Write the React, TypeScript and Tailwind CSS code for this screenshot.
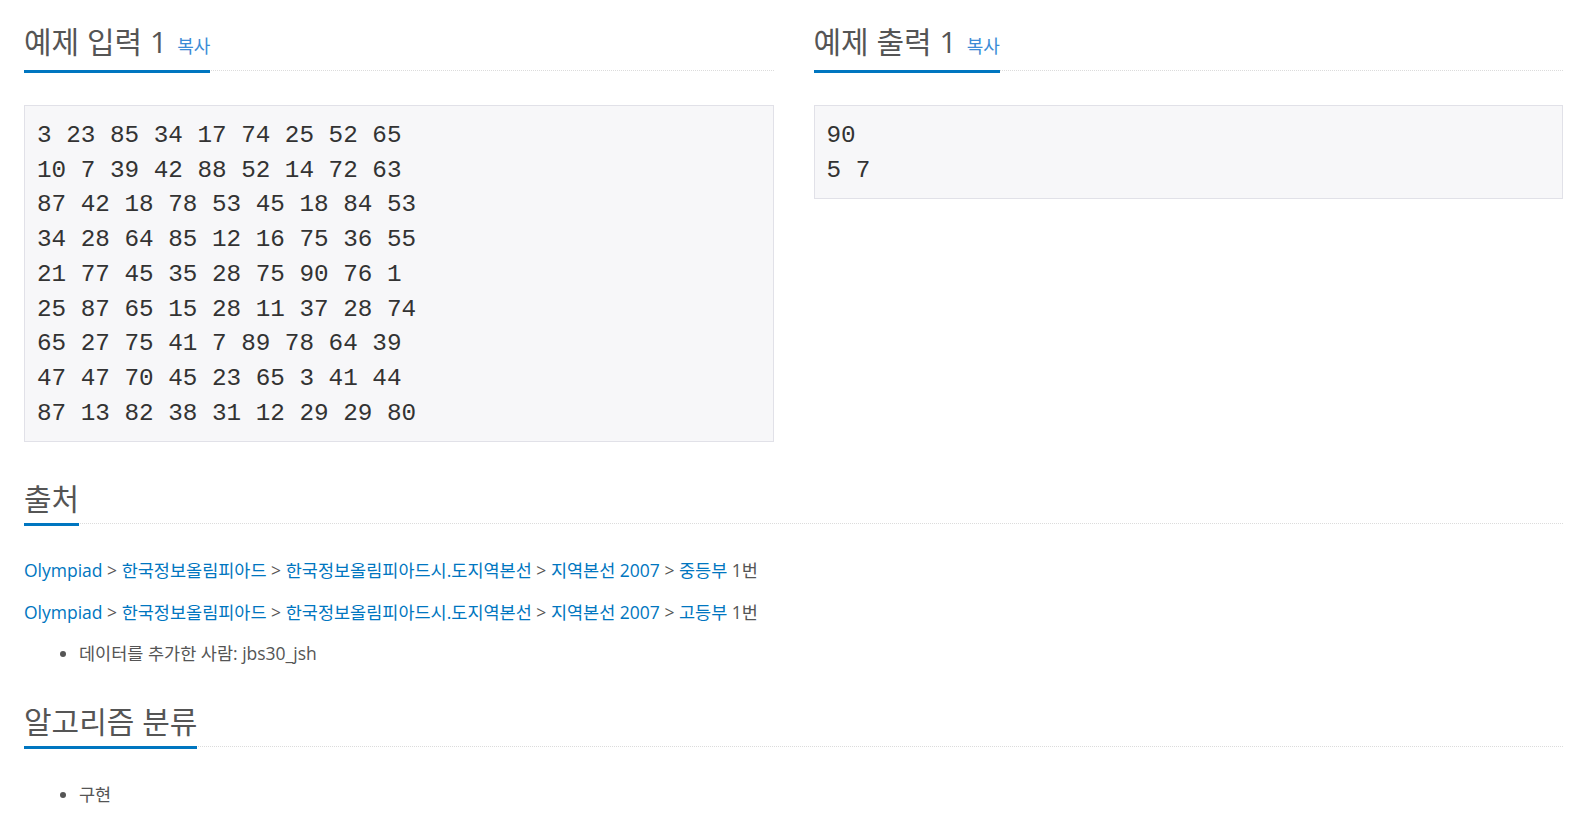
const sans = "font-['Open_Sans','Noto_Sans_CJK_KR',sans-serif]";

function Headline({ title, copy }: { title: string; copy?: boolean }) {
  return (
    <div className="border-b border-dotted border-[#dcdcdc]">
      <h2
        className={`inline-block mb-[-3px] pb-[6px] border-b-[3px] border-[#0076c0] text-[30px] leading-[36px] font-normal text-[#555] ${sans}`}
      >
        {title}
        {copy && (
          <span className="ml-[10px] text-[18px] text-[#3b8bd6]">복사</span>
        )}
      </h2>
    </div>
  );
}

function Sample({ title, lines }: { title: string; lines: string[] }) {
  return (
    <div className="flex-1 min-w-0">
      <Headline title={title} copy />
      <pre className="mt-[34px] px-[12px] pt-[13px] pb-[9.5px] bg-[#f7f7f9] border border-[#e1e1e8] text-[24.3px] leading-[34.7px] text-[#333] font-['Liberation_Mono',monospace]">
        {lines.join("\n")}
      </pre>
    </div>
  );
}

const input = [
  "3 23 85 34 17 74 25 52 65",
  "10 7 39 42 88 52 14 72 63",
  "87 42 18 78 53 45 18 84 53",
  "34 28 64 85 12 16 75 36 55",
  "21 77 45 35 28 75 90 76 1",
  "25 87 65 15 28 11 37 28 74",
  "65 27 75 41 7 89 78 64 39",
  "47 47 70 45 23 65 3 41 44",
  "87 13 82 38 31 12 29 29 80",
];

function Crumbs({ last }: { last: string }) {
  const links = ["Olympiad", "한국정보올림피아드", "한국정보올림피아드시.도지역본선", "지역본선 2007", last];
  return (
    <p className="text-[17.5px] leading-[26px] text-[#555]">
      {links.map((l, i) => (
        <span key={i}>
          {i > 0 && " > "}
          <a className="text-[#0076c0]">{l}</a>
        </span>
      ))}{" "}
      1번
    </p>
  );
}

export default function App() {
  return (
    <div className={`bg-white min-h-screen pl-[24px] pr-[15px] pt-[24px] ${sans}`}>
      <div className="flex gap-[40px]">
        <Sample title="예제 입력 1" lines={input} />
        <Sample title="예제 출력 1" lines={["90", "5 7"]} />
      </div>

      <div className="mt-[39px]">
        <Headline title="출처" />
        <div className="mt-[33px] flex flex-col gap-[16px]">
          <Crumbs last="중등부" />
          <Crumbs last="고등부" />
        </div>
        <ul className="mt-[15px] pl-[55px] list-disc text-[17.5px] leading-[26px] text-[#555]">
          <li>데이터를 추가한 사람: jbs30_jsh</li>
        </ul>
      </div>

      <div className="mt-[38px]">
        <Headline title="알고리즘 분류" />
        <ul className="mt-[34px] pl-[55px] list-disc text-[17.5px] leading-[26px] text-[#555]">
          <li>구현</li>
        </ul>
      </div>
    </div>
  );
}
